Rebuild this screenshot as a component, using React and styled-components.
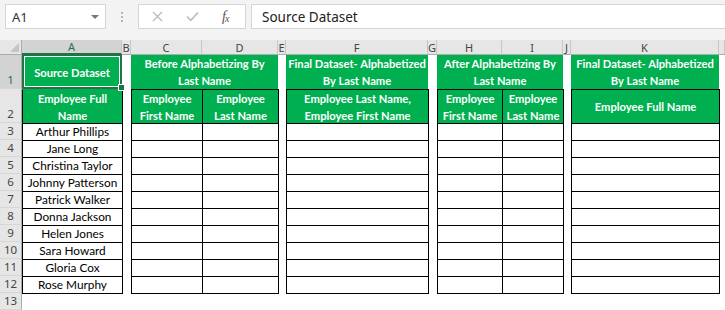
import React from 'react'
import styled, { createGlobalStyle, css } from 'styled-components'

const GREEN = '#00b050'
const SEL = '#217346'

const names = [
  'Arthur Phillips',
  'Jane Long',
  'Christina Taylor',
  'Johnny Patterson',
  'Patrick Walker',
  'Donna Jackson',
  'Helen Jones',
  'Sara Howard',
  'Gloria Cox',
  'Rose Murphy',
]

const letters = ['A', 'B', 'C', 'D', 'E', 'F', 'G', 'H', 'I', 'J', 'K', '']

const Global = createGlobalStyle`
  body {
    margin: 0;
    background: #fff;
    overflow: hidden;
  }
`

const Window = styled.div`
  width: 725px;
  height: 310px;
  overflow: hidden;
  background: #fff;
`

const FormulaBar = styled.div`
  height: 40px;
  box-sizing: border-box;
  padding: 4px 0 0 5px;
  background: #f3f3f3;
  display: flex;
  align-items: flex-start;
`

const NameBox = styled.div`
  width: 101px;
  height: 25px;
  box-sizing: border-box;
  background: #fff;
  border: 1px solid #d6d6d6;
  padding: 0 6px;
  display: flex;
  align-items: center;
  justify-content: space-between;
  font: 13px 'Noto Sans', sans-serif;
  color: #333;
`

const Caret = styled.span`
  width: 0;
  height: 0;
  border-left: 4px solid transparent;
  border-right: 4px solid transparent;
  border-top: 4px solid #777;
`

const Grip = styled.div`
  width: 32px;
  height: 25px;
  display: flex;
  flex-direction: column;
  align-items: center;
  justify-content: center;
  gap: 2px;

  span {
    width: 2px;
    height: 2px;
    background: #b4b4b4;
  }
`

const FxGroup = styled.div`
  width: 108px;
  height: 25px;
  box-sizing: border-box;
  background: #fff;
  border: 1px solid #d6d6d6;
  padding-left: 13px;
  display: flex;
  align-items: center;
  gap: 23px;
`

const Fx = styled.span`
  font: italic 14px 'Liberation Serif', serif;
  color: #555;
  letter-spacing: -1px;

  sub {
    font-size: 10px;
    vertical-align: -1px;
  }
`

const FormulaInput = styled.div`
  flex: 1;
  height: 25px;
  margin-left: 5px;
  box-sizing: border-box;
  background: #fff;
  border: 1px solid #d6d6d6;
  border-right: none;
  padding-left: 10px;
  display: flex;
  align-items: center;
  font: 13.5px 'Noto Sans', sans-serif;
  color: #222;
`

const Sheet = styled.div`
  display: grid;
  grid-template-columns: 22px 100px 9px 71px 76px 8px 142px 9px 65px 61px 8px 148px 1fr;
  grid-template-rows: 15px 34px 34px repeat(11, 17px);
  font-family: Lato, 'Liberation Sans', sans-serif;
`

const Corner = styled.div`
  background: #e6e6e6;
  border-right: 1px solid #ababab;
  border-bottom: 1px solid #ababab;
  box-sizing: border-box;
  display: flex;
  align-items: flex-end;
  justify-content: flex-end;
  padding: 0 2px 2px 0;
`

const ColHead = styled.div`
  box-sizing: border-box;
  background: ${p => (p.$active ? '#d3d3d3' : '#e6e6e6')};
  color: ${p => (p.$active ? SEL : '#444')};
  border-right: 1px solid #c6c6c6;
  border-bottom: ${p => (p.$active ? `2px solid ${SEL}` : '1px solid #ababab')};
  display: flex;
  align-items: center;
  justify-content: center;
  font: 11px 'Noto Sans', sans-serif;
`

const RowHead = styled.div`
  box-sizing: border-box;
  background: ${p => (p.$active ? '#d3d3d3' : '#e6e6e6')};
  color: ${p => (p.$active ? SEL : '#444')};
  border-right: 1px solid #ababab;
  border-bottom: 1px solid #d6d6d6;
  display: flex;
  align-items: flex-end;
  justify-content: center;
  padding-bottom: 1px;
  font: 11.5px 'Noto Sans', sans-serif;
  line-height: 15px;
`

const Head = styled.div`
  grid-column: span ${p => p.$span || 1};
  box-sizing: border-box;
  background: ${GREEN};
  color: #fff;
  font-weight: 700;
  font-size: 11.2px;
  line-height: 17px;
  white-space: nowrap;
  text-align: center;
  display: flex;
  align-items: center;
  justify-content: center;
  position: relative;
  ${p =>
    p.$boxed
      ? css`
          border: 1px solid #000;
          margin: 0 -1px -1px 0;
        `
      : css`
          border-bottom: 1px solid #000;
          margin-bottom: -1px;
        `}
  ${p =>
    p.$selected &&
    css`
      z-index: 2;
      border-bottom-color: ${GREEN};

      &::after {
        content: '';
        position: absolute;
        top: -1px;
        left: 0;
        right: 0;
        bottom: 0;
        border: 2px solid ${SEL};
        box-shadow: inset 0 0 0 1px #fff;
      }

      &::before {
        content: '';
        position: absolute;
        right: -3px;
        bottom: -2px;
        width: 5px;
        height: 5px;
        background: ${SEL};
        border: 1px solid #fff;
        z-index: 3;
      }
    `}
`

const Cell = styled.div`
  box-sizing: border-box;
  border: 1px solid #000;
  margin: 0 -1px -1px 0;
  font-size: 11.8px;
  line-height: 15px;
  color: #000;
  text-align: center;
  white-space: nowrap;
`

const Blank = styled.div`
  grid-column: span ${p => p.$span || 1};
`

const XIcon = () => (
  <svg width="11" height="11" viewBox="0 0 11 11">
    <path d="M1 1 L10 10 M10 1 L1 10" stroke="#bcbcbc" strokeWidth="1.4" fill="none" />
  </svg>
)

const CheckIcon = () => (
  <svg width="13" height="11" viewBox="0 0 13 11">
    <path d="M1 5.5 L4.8 9.3 L12 1.5" stroke="#bcbcbc" strokeWidth="1.6" fill="none" />
  </svg>
)

const CornerMark = () => (
  <svg width="9" height="9" viewBox="0 0 9 9">
    <path d="M9 0 L9 9 L0 9 Z" fill="#c4c4c4" />
  </svg>
)

const DataRow = ({ n, name }) => (
  <>
    <RowHead>{n}</RowHead>
    <Cell>{name}</Cell>
    <Blank />
    <Cell />
    <Cell />
    <Blank />
    <Cell />
    <Blank />
    <Cell />
    <Cell />
    <Blank />
    <Cell />
    <Blank />
  </>
)

export default function App() {
  return (
    <Window>
      <Global />
      <FormulaBar>
        <NameBox>
          A1
          <Caret />
        </NameBox>
        <Grip>
          <span />
          <span />
          <span />
        </Grip>
        <FxGroup>
          <XIcon />
          <CheckIcon />
          <Fx>
            f<sub>x</sub>
          </Fx>
        </FxGroup>
        <FormulaInput>Source Dataset</FormulaInput>
      </FormulaBar>

      <Sheet>
        <Corner>
          <CornerMark />
        </Corner>
        {letters.map((l, i) => (
          <ColHead key={i} $active={l === 'A'}>
            {l}
          </ColHead>
        ))}

        <RowHead $active>1</RowHead>
        <Head $selected>Source Dataset</Head>
        <Blank />
        <Head $span={2}>
          Before Alphabetizing By
          <br />
          Last Name
        </Head>
        <Blank />
        <Head>
          Final Dataset- Alphabetized
          <br />
          By Last Name
        </Head>
        <Blank />
        <Head $span={2}>
          After Alphabetizing By
          <br />
          Last Name
        </Head>
        <Blank />
        <Head>
          Final Dataset- Alphabetized
          <br />
          By Last Name
        </Head>
        <Blank />

        <RowHead>2</RowHead>
        <Head $boxed>
          Employee Full
          <br />
          Name
        </Head>
        <Blank />
        <Head $boxed>
          Employee
          <br />
          First Name
        </Head>
        <Head $boxed>
          Employee
          <br />
          Last Name
        </Head>
        <Blank />
        <Head $boxed>
          Employee Last Name,
          <br />
          Employee First Name
        </Head>
        <Blank />
        <Head $boxed>
          Employee
          <br />
          First Name
        </Head>
        <Head $boxed>
          Employee
          <br />
          Last Name
        </Head>
        <Blank />
        <Head $boxed>Employee Full Name</Head>
        <Blank />

        {names.map((name, i) => (
          <DataRow key={name} n={i + 3} name={name} />
        ))}

        <RowHead>13</RowHead>
        <Blank $span={12} />
      </Sheet>
    </Window>
  )
}
